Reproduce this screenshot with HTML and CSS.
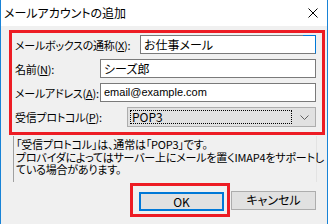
FILE: index.html
```html
<!DOCTYPE html>
<html lang="ja">
<head>
  <meta charset="UTF-8">
  <title>メールアカウントの追加</title>
  <link rel="stylesheet" href="styles.css">
</head>
<body>
  <div class="window">
    <div class="titlebar">
      <span class="title">メールアカウントの追加</span>
      <svg class="close" width="10" height="10" viewBox="0 0 10 10">
        <path d="M0.5 0.5 L9.5 9.5 M9.5 0.5 L0.5 9.5" stroke="#000" stroke-width="1" fill="none"/>
      </svg>
    </div>

    <div class="client">
      <div class="mark account-form">
        <div class="row">
          <span class="label">メールボックスの通称(<u>X</u>):</span>
          <div class="field short focused">お仕事メール</div>
        </div>
        <div class="row">
          <span class="label">名前(<u>N</u>):</span>
          <div class="field">シーズ郎</div>
        </div>
        <div class="row">
          <span class="label">メールアドレス(<u>A</u>):</span>
          <div class="field latin">email@example.com</div>
        </div>
        <div class="row">
          <span class="label">受信プロトコル(<u>P</u>):</span>
          <div class="combo">
            <span class="combo-value">POP3</span>
            <svg class="chevron" width="9" height="5" viewBox="0 0 9 5">
              <path d="M0.5 0.5 L4.5 4.5 L8.5 0.5" stroke="#606060" stroke-width="1" fill="none"/>
            </svg>
          </div>
        </div>
      </div>

      <div class="note">
        <div>「受信プロトコル」は、通常は「POP3」です。</div>
        <div>プロバイダによってはサーバー上にメールを置くIMAP4をサポートし</div>
        <div>ている場合があります。</div>
      </div>

      <div class="buttons">
        <div class="mark ok-mark">
          <button class="btn default">OK</button>
        </div>
        <button class="btn">キャンセル</button>
      </div>
    </div>
  </div>
</body>
</html>
```

FILE: styles.css
```css
:root {
  --win-blue: #1883d7;
  --focus-blue: #0078d7;
  --face: #f0f0f0;
  --mark-red: #ed1c24;
  --edit-border: #7a7a7a;
  --btn-face: #e1e1e1;
  --btn-border: #adadad;
}

* {
  box-sizing: border-box;
}

body {
  margin: 0;
  background: #fff;
  font-family: "Noto Sans CJK JP", "Noto Sans", sans-serif;
  font-size: 12px;
  font-feature-settings: "palt";
  color: #000;
}

.window {
  width: 328px;
  height: 224px;
  border-left: 1px solid var(--win-blue);
  border-right: 1px solid var(--win-blue);
  background: var(--face);
  display: flex;
  flex-direction: column;
  overflow: hidden;
}

.titlebar {
  height: 26px;
  background: #fff;
  display: flex;
  align-items: center;
  justify-content: space-between;
  padding: 0 9px 0 3px;
}

.title {
  line-height: 12px;
}

.close {
  display: block;
}

.client {
  padding: 4px 0 0 8px;
  display: flex;
  flex-direction: column;
}

.mark {
  border: 3px solid var(--mark-red);
}

.account-form {
  width: 316px;
  padding: 2px 6px 5px 3px;
  display: flex;
  flex-direction: column;
  gap: 5px;
  font-size: 11px;
  letter-spacing: -0.25px;
}

.row {
  display: flex;
  align-items: center;
  justify-content: space-between;
}

.label {
  line-height: 12px;
  white-space: nowrap;
}

.label u {
  text-underline-offset: 1px;
}

.field {
  position: relative;
  width: 216px;
  height: 19px;
  border: 1px solid var(--edit-border);
  background: #fff;
  padding: 0 3px;
  line-height: 17px;
  font-size: 12px;
  letter-spacing: 0;
}

.field.short {
  width: 176px;
}

.field.latin {
  font-family: "Liberation Sans", Arial, sans-serif;
  font-size: 11px;
}

.field.focused {
  border-right-color: var(--focus-blue);
}

.field.focused::before {
  content: "";
  position: absolute;
  top: -1px;
  right: -1px;
  width: 13px;
  height: 1px;
  background: var(--focus-blue);
}

.combo {
  width: 189px;
  height: 20px;
  border: 1px solid var(--btn-border);
  background: var(--btn-face);
  display: flex;
  align-items: center;
  padding: 2px 6px 2px 2px;
  gap: 8px;
}

.combo-value {
  flex: 1;
  height: 14px;
  border: 1px dotted #000;
  padding-left: 1px;
  line-height: 12px;
  font-size: 12px;
  letter-spacing: 0;
}

.chevron {
  display: block;
}

.note {
  margin: 1px 0 0 4px;
  width: 304px;
  height: 46px;
  border-left: 1px solid #a0a0a0;
  border-right: 1px solid #e3e3e3;
  padding: 2px 0 0 2px;
  font-size: 11px;
  line-height: 12.5px;
  letter-spacing: -0.2px;
  white-space: nowrap;
}

.buttons {
  margin-top: 1px;
  display: flex;
  justify-content: flex-end;
  align-items: center;
  gap: 1px;
  padding-right: 11px;
}

.ok-mark {
  padding: 6px 3px 3px 6px;
}

.btn {
  width: 85px;
  height: 19px;
  border: 1px solid var(--btn-border);
  background: var(--btn-face);
  font: inherit;
  font-size: 12px;
  line-height: 12px;
  padding: 0;
  color: #000;
}

.btn.default {
  border: 2px solid var(--focus-blue);
}
```
